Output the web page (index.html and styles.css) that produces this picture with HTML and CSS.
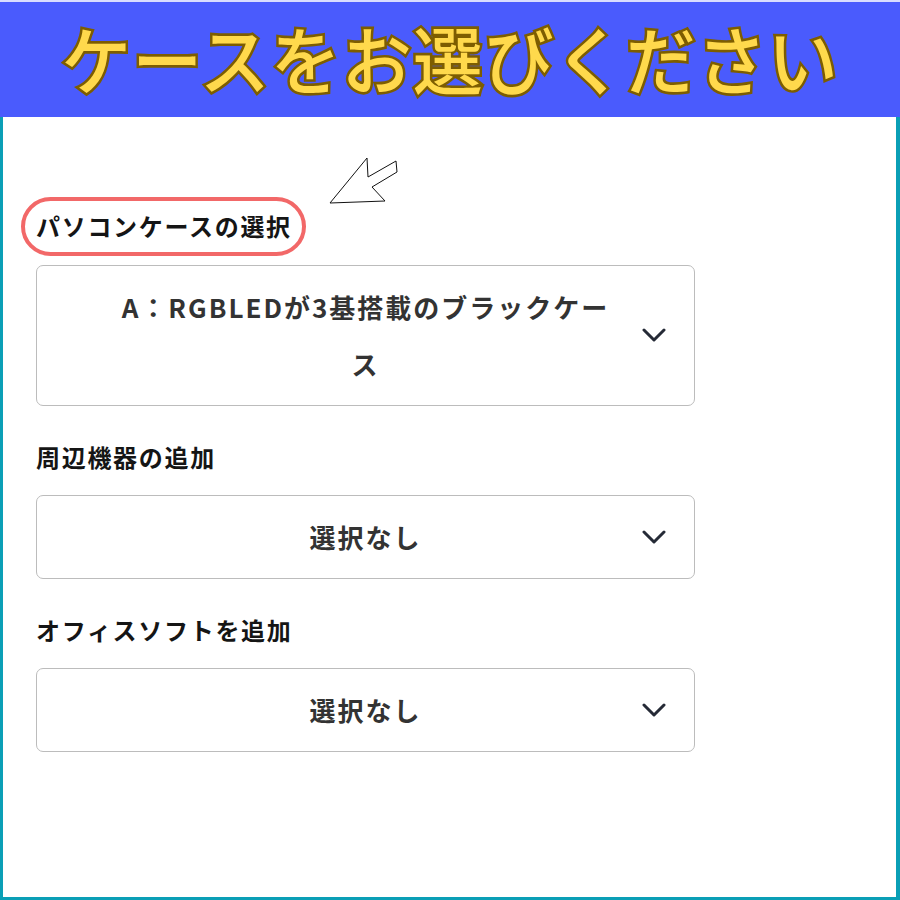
FILE: index.html
```html
<!DOCTYPE html>
<html lang="ja">
<head>
  <meta charset="UTF-8" />
  <meta name="viewport" content="width=device-width, initial-scale=1.0" />
  <title>ケースをお選びください</title>
  <link rel="stylesheet" href="styles.css">
</head>
<body>
  <div class="header">
    <h1>ケースをお選びください</h1>
  </div>

  <div class="panel">
    <svg class="pointer-arrow" width="80" height="60" viewBox="0 0 80 60">
      <polygon points="2,48 39,3 40,22 68,6 69,17 44,32 57,46" fill="#fff" stroke="#111" stroke-width="1" stroke-linejoin="miter" />
    </svg>

    <div class="form">
      <div class="field field-marked">
        <label class="field-label marked">パソコンケースの選択</label>
        <div class="select">
          <span class="select-value">A：RGBLEDが3基搭載のブラックケース</span>
          <svg class="chevron" width="24" height="14" viewBox="0 0 24 14">
            <polyline points="2,2 12,12 22,2" fill="none" stroke="#252a36" stroke-width="3" stroke-linecap="round" stroke-linejoin="round" />
          </svg>
        </div>
      </div>

      <div class="field">
        <label class="field-label">周辺機器の追加</label>
        <div class="select">
          <span class="select-value">選択なし</span>
          <svg class="chevron" width="24" height="14" viewBox="0 0 24 14">
            <polyline points="2,2 12,12 22,2" fill="none" stroke="#252a36" stroke-width="3" stroke-linecap="round" stroke-linejoin="round" />
          </svg>
        </div>
      </div>

      <div class="field">
        <label class="field-label">オフィスソフトを追加</label>
        <div class="select">
          <span class="select-value">選択なし</span>
          <svg class="chevron" width="24" height="14" viewBox="0 0 24 14">
            <polyline points="2,2 12,12 22,2" fill="none" stroke="#252a36" stroke-width="3" stroke-linecap="round" stroke-linejoin="round" />
          </svg>
        </div>
      </div>
    </div>
  </div>
</body>
</html>
```

FILE: styles.css
```css
* {
  margin: 0;
  padding: 0;
  box-sizing: border-box;
}

body {
  font-family: 'Noto Sans CJK JP', 'Noto Sans', sans-serif;
  background: #fff;
  color: #1a1a1a;
}

.header {
  height: 117px;
  border-top: 2px solid #d9ddff;
  background: #4a5bfd;
  display: flex;
  align-items: center;
  justify-content: center;
}

.header h1 {
  font-size: 70px;
  font-weight: 500;
  line-height: 1;
  letter-spacing: 1px;
  color: #ffd94c;
  -webkit-text-stroke: 5px #7d5d00;
  paint-order: stroke fill;
  margin-top: -6px;
  transform: scaleY(1.06);
}

.panel {
  position: relative;
  height: calc(100vh - 117px);
  border-left: 3px solid #0a9fb6;
  border-right: 4px solid #0a9fb6;
  border-bottom: 3px solid #0a9fb6;
  padding: 80px 0 0 33px;
}

.pointer-arrow {
  position: absolute;
  left: 325px;
  top: 38px;
}

.form {
  width: 659px;
  display: flex;
  flex-direction: column;
  gap: 39px;
}

.field {
  display: flex;
  flex-direction: column;
  align-items: flex-start;
  gap: 26px;
}

.field-marked {
  gap: 9px;
}

.field-label {
  font-size: 24px;
  font-weight: 700;
  line-height: 24px;
  letter-spacing: 1.7px;
  color: #151515;
}

.field-label.marked {
  margin-left: -15px;
  padding: 13px 10px 14px 11px;
  border: 4px solid #f26868;
  border-radius: 30px;
}

.select {
  width: 100%;
  display: grid;
  grid-template-columns: 80px 1fr 80px;
  align-items: center;
  padding: 12px 0 13px;
  border: 1px solid #bcbcbc;
  border-radius: 7px;
  background: #fff;
}

.select-value {
  grid-column: 2;
  text-align: center;
  font-size: 26px;
  font-weight: 700;
  line-height: 57px;
  letter-spacing: 2px;
  color: #333;
}

.chevron {
  grid-column: 3;
  justify-self: center;
}
```
